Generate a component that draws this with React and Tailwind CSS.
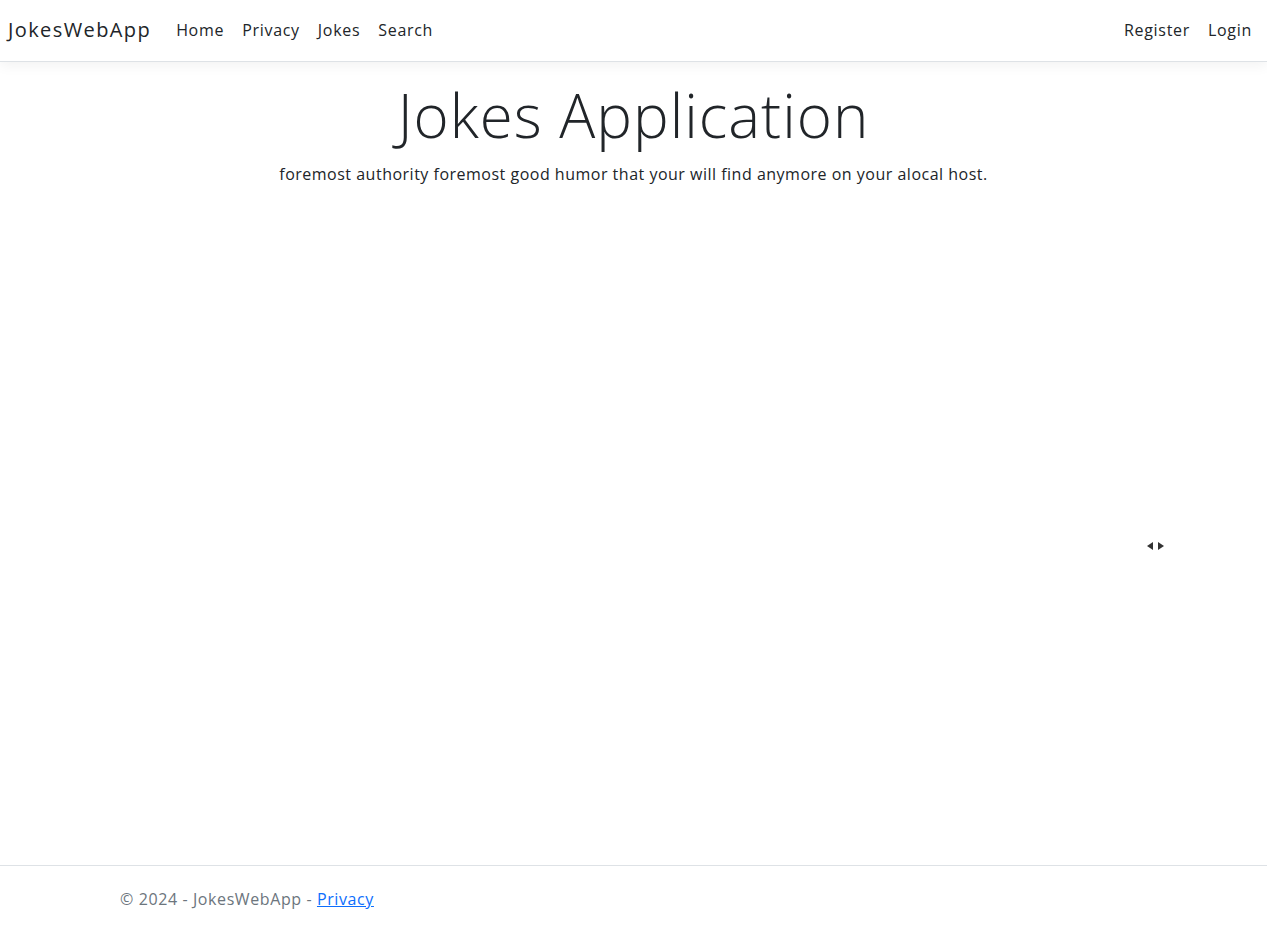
export default function App() {
  return (
    <div className="min-h-[932px] flex flex-col bg-white text-[#212529] font-['Open_Sans','Noto_Sans',sans-serif] relative">
      <header>
        <nav className="h-[62px] flex items-center px-2 pb-[2px] border-b border-[#dee2e6] shadow-[0_4px_12px_rgba(0,0,0,0.05)] bg-white">
          <a className="text-[20px] tracking-[1.4px] text-[#212529] mr-4">JokesWebApp</a>
          <ul className="flex items-center text-[16px] tracking-[0.7px] flex-1">
            <li className="px-[9px]">Home</li>
            <li className="px-[9px]">Privacy</li>
            <li className="px-[9px]">Jokes</li>
            <li className="px-[9px]">Search</li>
          </ul>
          <ul className="flex items-center text-[16px] tracking-[0.7px]">
            <li className="px-[9px]">Register</li>
            <li className="pl-[9px] pr-[7px]">Login</li>
          </ul>
        </nav>
      </header>
      <main className="flex-1 pt-[19px] text-center">
        <h1 className="text-[60px] tracking-[1px] font-light leading-[1.15]">Jokes Application</h1>
        <p className="text-[16px] tracking-[0.5px] mt-[12px]">foremost authority foremost good humor that your will find anymore on your alocal host.</p>
      </main>
      <div className="absolute left-[1147px] top-[542px] flex gap-[3px]">
        <svg width="7" height="8" viewBox="0 0 7 8"><path d="M6 0 L0 4 L6 8 Z" fill="#333" /></svg>
        <svg width="7" height="8" viewBox="0 0 7 8"><path d="M1 0 L7 4 L1 8 Z" fill="#333" /></svg>
      </div>
      <footer className="border-t border-[#dee2e6] h-[67px] flex items-center pl-[120px] text-[16px] tracking-[0.6px] text-[#6c757d]">
        <span>© 2024 - JokesWebApp - <a className="text-[#0d6efd] underline">Privacy</a></span>
      </footer>
    </div>
  )
}
